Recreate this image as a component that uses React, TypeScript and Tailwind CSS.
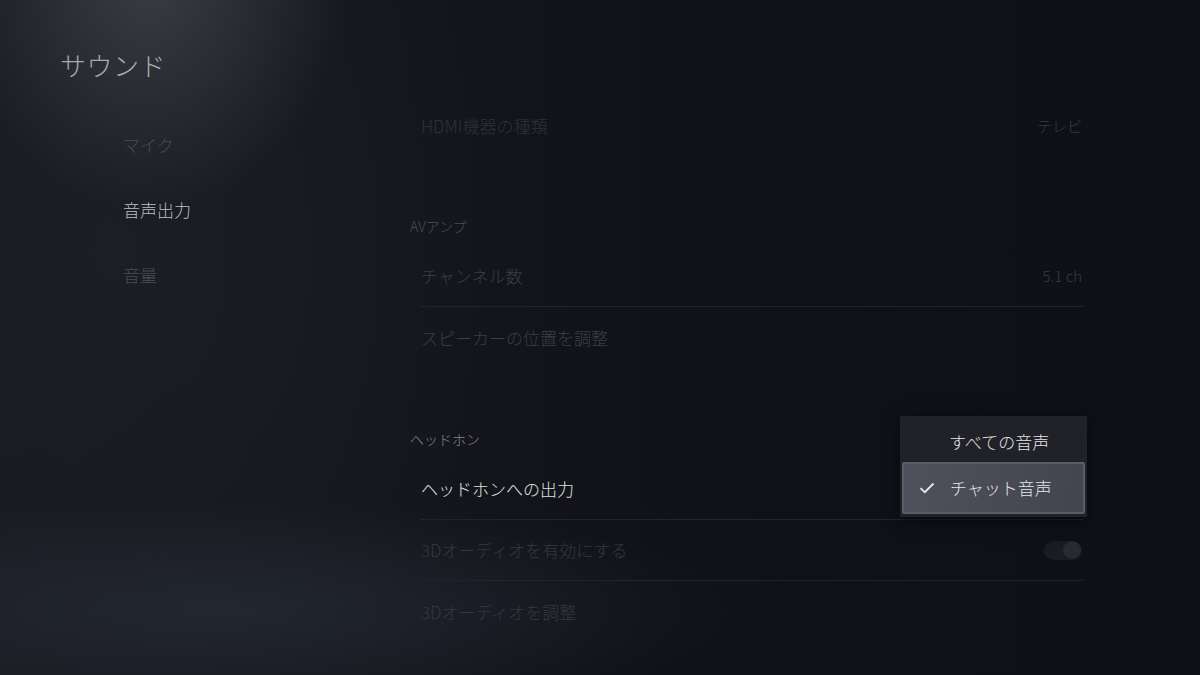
import React from "react";

const font = { fontFamily: '"Noto Sans CJK JP", "Noto Sans", sans-serif' };

function Row({
  label,
  value,
  color,
  border,
  children,
}: {
  label: string;
  value?: string;
  color: string;
  border?: boolean;
  children?: React.ReactNode;
}) {
  return (
    <div
      className={`ml-[10px] mr-[4px] h-[61px] flex items-center justify-between pl-[1px] pr-[1px] ${
        border ? "border-b border-[#22242a]" : ""
      }`}
    >
      <span className={`text-[17px] leading-[24px] font-light ${color}`}>{label}</span>
      {value && <span className="text-[15px] leading-[24px] font-light text-[#393b41]">{value}</span>}
      {children}
    </div>
  );
}

export default function App() {
  return (
    <div
      style={font}
      className="relative w-[1200px] h-[675px] overflow-hidden flex bg-[radial-gradient(ellipse_200px_240px_at_150px_-30px,rgba(82,84,92,0.6),transparent),radial-gradient(ellipse_520px_110px_at_220px_610px,rgba(44,50,62,0.55),transparent),radial-gradient(ellipse_380px_480px_at_120px_250px,rgba(32,34,42,0.55),transparent),linear-gradient(90deg,#181a20_0%,#15171d_30%,#101218_55%,#0e1016_100%)]"
    >
      {/* Left column */}
      <div className="w-[410px] shrink-0 flex flex-col">
        <div className="pl-[60px] pt-[47px] text-[26px] leading-[36px] font-light text-[#a9a9ac] tracking-[0.5px]">
          サウンド
        </div>
        <div className="pl-[123px] pt-[50px] flex flex-col gap-[41px] text-[17px] leading-[24px] font-light">
          <span className="text-[#4b4c51]">マイク</span>
          <span className="text-[#bdbdbf]">音声出力</span>
          <span className="text-[#4b4c51]">音量</span>
        </div>
      </div>

      {/* Right column */}
      <div className="w-[677px] shrink-0 flex flex-col pt-[95px]">
        <Row label="HDMI機器の種類" value="テレビ" color="text-[#2f3137]" />

        <div className="mt-[60px] h-[20px] text-[14px] leading-[20px] font-light text-[#4f5156]">AVアンプ</div>
        <div className="mt-[10px]">
          <Row label="チャンネル数" value="5.1 ch" color="text-[#3c3e44]" border />
          <Row label="スピーカーの位置を調整" color="text-[#3c3e44]" />
        </div>

        <div className="mt-[61px] h-[20px] text-[14px] leading-[20px] font-light text-[#85868a]">ヘッドホン</div>
        <div className="mt-[10px]">
          <Row label="ヘッドホンへの出力" color="text-[#e0e0e2]" border />
          <Row label="3Dオーディオを有効にする" color="text-[#35373d]" border>
            <div className="w-[38px] h-[19px] rounded-full bg-[#1a1c22] flex items-center justify-end pr-[1px]">
              <div className="w-[18px] h-[18px] rounded-full bg-[#282a30]" />
            </div>
          </Row>
          <Row label="3Dオーディオを調整" color="text-[#35373d]" />
        </div>
      </div>

      {/* Dropdown menu overlay */}
      <div className="absolute left-[900px] top-[416px] w-[187px] h-[101px] bg-[#212228] shadow-[0_4px_16px_rgba(0,0,0,0.5)] flex flex-col">
        <div className="h-[46px] flex items-center pl-[49px] text-[17px] leading-[24px] font-light text-[#e4e4e6] pt-[6px]">
          すべての音声
        </div>
        <div className="mx-[2px] h-[52px] rounded-[2px] border-2 border-[#5b5e68] bg-[linear-gradient(100deg,#4f525c,#42454f)] flex items-center pl-[15px] text-[17px] leading-[24px] font-light text-[#e4e4e6]">
          <svg width="16" height="12" viewBox="0 0 16 12" className="mr-[15px]">
            <path d="M1.5 6.2 L5.8 10.2 L14.5 1.5" fill="none" stroke="#e8e8ea" strokeWidth="1.8" />
          </svg>
          チャット音声
        </div>
      </div>
    </div>
  );
}
